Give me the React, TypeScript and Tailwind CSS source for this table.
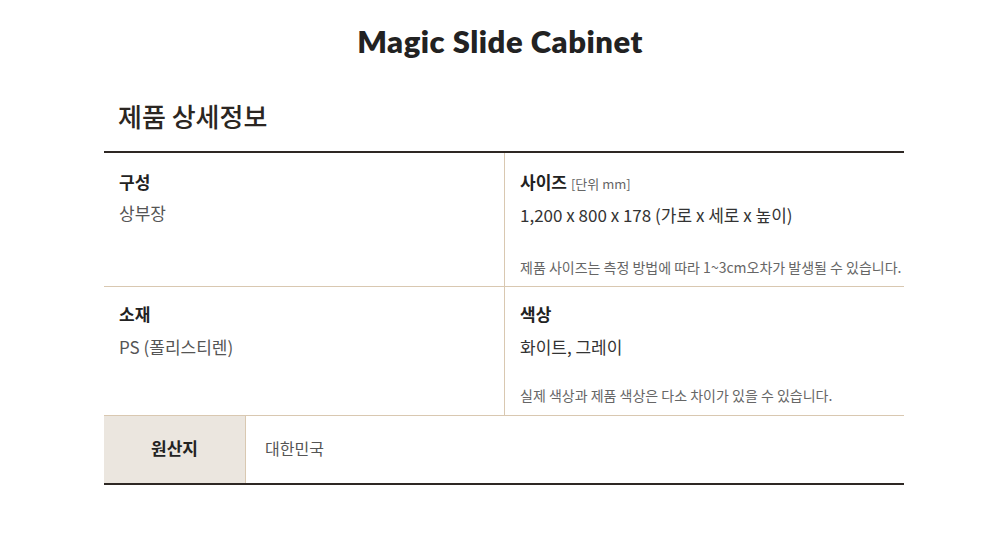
const kr = "font-['Noto_Sans_CJK_KR','Noto_Sans',sans-serif]";

function Cell(props: { label: string; unit?: string; value: string; note?: string; right?: boolean; tight?: boolean }) {
  return (
    <div
      className={
        "px-[15px] " +
        (props.tight ? "pt-[15px] pb-[10px] " : "pt-[17px] pb-[9px] ") +
        (props.right ? "border-l border-[#d9c8b1]" : "")
      }
    >
      <p className="text-[17px] leading-6 font-bold text-[#222]">
        {props.label}
        {props.unit && <span className="ml-[4px] text-[13px] font-normal text-[#666]">{props.unit}</span>}
      </p>
      <p className={(props.tight ? "mt-[9px] " : "mt-[7px] ") + "text-[17px] leading-6 " + (props.right ? "text-[#333]" : "text-[#555]")}>
        {props.value}
      </p>
      {props.note && (
        <p className={(props.tight ? "mt-[26px] " : "mt-[30px] ") + "whitespace-nowrap text-[14px] leading-5 text-[#666]"}>
          {props.note}
        </p>
      )}
    </div>
  );
}

export default function App() {
  return (
    <div className={"w-[1000px] h-[538px] bg-white " + kr}>
      <h1 className="pt-[21px] text-center text-[31px] leading-10 font-extrabold tracking-[0.5px] text-[#222] font-['Lato',sans-serif]">
        Magic Slide Cabinet
      </h1>
      <div className="w-[800px] ml-[104px] mt-[37px]">
        <h2 className="pl-[14px] text-[26px] leading-9 font-medium text-[#2b2622]">제품 상세정보</h2>
        <div className="mt-[17px] border-t-2 border-b-2 border-[#2e2824]">
          <div className="grid grid-cols-2 border-b border-[#d9c8b1]">
            <Cell label="구성" value="상부장" />
            <Cell
              right
              label="사이즈"
              unit="[단위 mm]"
              value="1,200 x 800 x 178 (가로 x 세로 x 높이)"
              note="제품 사이즈는 측정 방법에 따라 1~3cm오차가 발생될 수 있습니다."
            />
          </div>
          <div className="grid grid-cols-2 border-b border-[#d9c8b1]">
            <Cell tight label="소재" value="PS (폴리스티렌)" />
            <Cell tight right label="색상" value="화이트, 그레이" note="실제 색상과 제품 색상은 다소 차이가 있을 수 있습니다." />
          </div>
          <div className="flex h-[67px]">
            <div className="w-[142px] flex items-center justify-center pb-[3px] bg-[#ebe6df] border-r border-[#d9c8b1] text-[17px] font-bold text-[#222]">
              원산지
            </div>
            <div className="flex items-center pb-[3px] pl-[19px] text-[16px] text-[#555]">대한민국</div>
          </div>
        </div>
      </div>
    </div>
  );
}
